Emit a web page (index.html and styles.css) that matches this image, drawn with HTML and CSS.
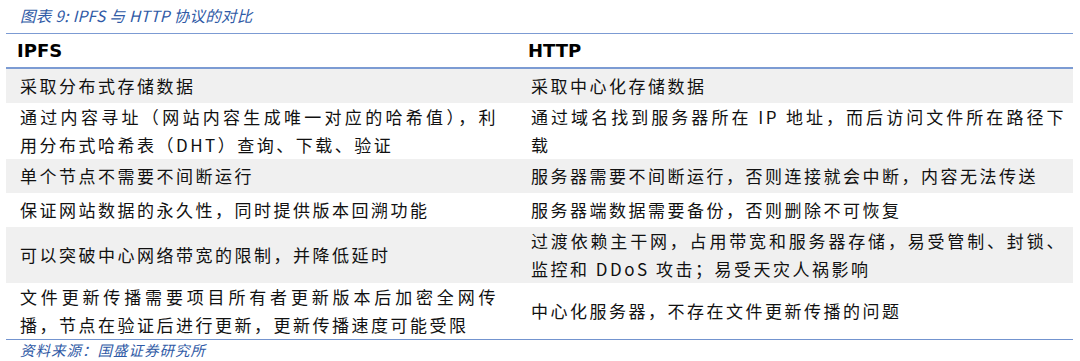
FILE: index.html
```html
<!DOCTYPE html>
<html lang="zh-CN">
<head>
<meta charset="utf-8">
<title>IPFS 与 HTTP 协议的对比</title>
<link rel="stylesheet" href="styles.css">
</head>
<body>
<div class="page">
  <div class="title">图表 9: IPFS 与 HTTP 协议的对比</div>
  <div class="table">
    <div class="row head">
      <div class="cell left">IPFS</div>
      <div class="cell right">HTTP</div>
    </div>
    <div class="row gray">
      <div class="cell left">采取分布式存储数据</div>
      <div class="cell right">采取中心化存储数据</div>
    </div>
    <div class="row">
      <div class="cell left">通过内容寻址（网站内容生成唯一对应的哈希值），利用分布式哈希表（DHT）查询、下载、验证</div>
      <div class="cell right">通过域名找到服务器所在 IP 地址，而后访问文件所在路径下载</div>
    </div>
    <div class="row gray">
      <div class="cell left">单个节点不需要不间断运行</div>
      <div class="cell right">服务器需要不间断运行，否则连接就会中断，内容无法传送</div>
    </div>
    <div class="row">
      <div class="cell left">保证网站数据的永久性，同时提供版本回溯功能</div>
      <div class="cell right">服务器端数据需要备份，否则删除不可恢复</div>
    </div>
    <div class="row gray">
      <div class="cell left">可以突破中心网络带宽的限制，并降低延时</div>
      <div class="cell right">过渡依赖主干网，占用带宽和服务器存储，易受管制、封锁、监控和 DDoS 攻击；易受天灾人祸影响</div>
    </div>
    <div class="row">
      <div class="cell left">文件更新传播需要项目所有者更新版本后加密全网传播，节点在验证后进行更新，更新传播速度可能受限</div>
      <div class="cell right">中心化服务器，不存在文件更新传播的问题</div>
    </div>
  </div>
  <div class="source">资料来源：国盛证券研究所</div>
</div>
</body>
</html>
```

FILE: styles.css
```css
html, body {
  margin: 0;
  padding: 0;
  background: #ffffff;
}

.page {
  width: 1080px;
  font-family: "Noto Sans CJK SC", sans-serif;
  color: #111111;
}

.title {
  height: 33px;
  line-height: 30px;
  padding-left: 20px;
  font-size: 15.5px;
  letter-spacing: 0.3px;
  font-style: italic;
  color: #2f5aa6;
}

.table {
  margin-left: 6px;
  width: 1067px;
  border-top: 1px solid #7c9bd3;
  border-bottom: 1px solid #7394cf;
}

.row {
  display: grid;
  grid-template-columns: 508px 1fr;
  align-items: center;
  min-height: 34px;
  background: #ffffff;
}

.row.gray {
  background: #f0f0f0;
}

.row.head {
  min-height: 33px;
  height: 33px;
  border-bottom: 2px solid #7c9bd3;
}

.cell {
  font-size: 17px;
  letter-spacing: 2.5px;
  line-height: 28px;
  text-align: justify;
}

.cell.left {
  padding: 0 16px 0 14px;
}

.cell.right {
  padding: 0 7px 0 17px;
}

.head .cell {
  font-family: "DejaVu Sans", sans-serif;
  font-weight: bold;
  font-size: 18px;
  letter-spacing: 0;
  color: #000000;
}

.head .cell.left {
  padding-left: 11px;
}

.head .cell.right {
  padding-left: 14px;
}

.source {
  padding-left: 20px;
  line-height: 20px;
  font-size: 14.5px;
  letter-spacing: 1px;
  font-style: italic;
  color: #2f5aa6;
}
```
